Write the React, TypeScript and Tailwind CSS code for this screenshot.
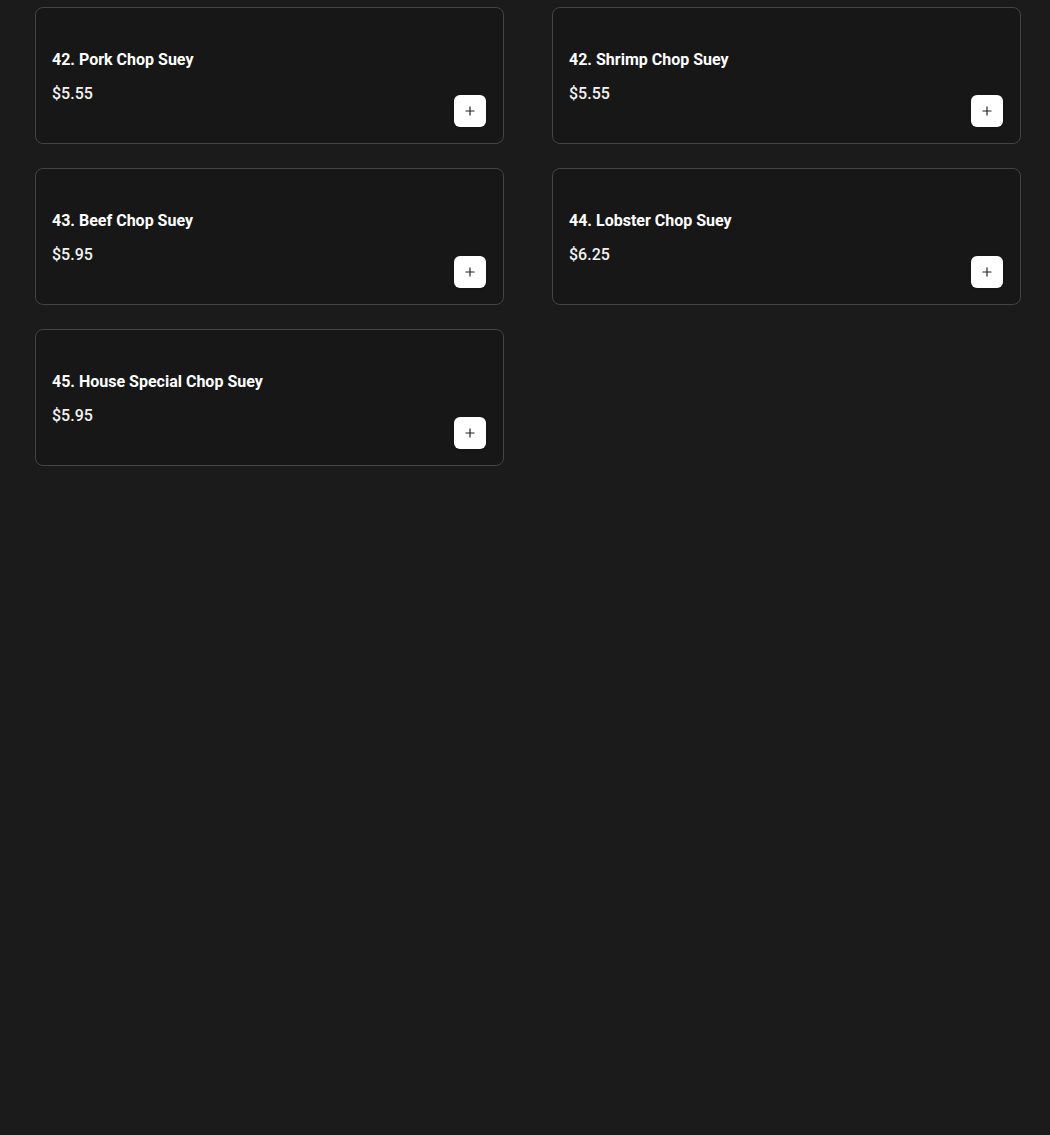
import { Plus } from "lucide-react"

const items = [
  { name: "42. Pork Chop Suey", price: "$5.55" },
  { name: "42. Shrimp Chop Suey", price: "$5.55" },
  { name: "43. Beef Chop Suey", price: "$5.95" },
  { name: "44. Lobster Chop Suey", price: "$6.25" },
  { name: "45. House Special Chop Suey", price: "$5.95" },
]

function MenuCard({ name, price }: { name: string; price: string }) {
  return (
    <div className="h-[137px] rounded-lg border border-[#444444] bg-[#171717] p-4 flex justify-between">
      <div className="pt-[24px] flex flex-col">
        <h3 className="text-[16px] leading-[24px] font-bold text-white">{name}</h3>
        <p className="mt-[10px] text-[16px] leading-[24px] font-medium text-[#f2f2f2]">{price}</p>
      </div>
      <button className="self-end mr-[1px] w-8 h-8 rounded-md bg-white flex items-center justify-center shadow">
        <Plus className="w-[14px] h-[14px] text-[#222]" strokeWidth={2} />
      </button>
    </div>
  )
}

export default function App() {
  return (
    <div
      className="min-h-[1135px] w-full bg-[#1b1b1b] pt-[7px] pl-[35px]"
      style={{ fontFamily: "Roboto, 'Liberation Sans', sans-serif" }}
    >
      <div className="grid grid-cols-[469px_469px] gap-x-[48px] gap-y-[24px]">
        {items.map((item) => (
          <MenuCard key={item.name} name={item.name} price={item.price} />
        ))}
      </div>
    </div>
  )
}
